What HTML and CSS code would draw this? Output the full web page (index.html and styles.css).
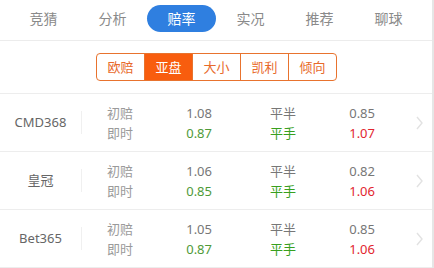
FILE: index.html
```html
<!DOCTYPE html>
<html lang="zh-CN">
<head>
<meta charset="utf-8">
<title>赔率</title>
<link rel="stylesheet" href="styles.css">
</head>
<body>
<div class="page">
  <nav class="tabs">
    <span class="tab">竞猜</span>
    <span class="tab">分析</span>
    <span class="tab active">赔率</span>
    <span class="tab">实况</span>
    <span class="tab">推荐</span>
    <span class="tab">聊球</span>
  </nav>
  <div class="seg-wrap">
    <div class="seg">
      <span class="seg-item">欧赔</span>
      <span class="seg-item on">亚盘</span>
      <span class="seg-item">大小</span>
      <span class="seg-item">凯利</span>
      <span class="seg-item">倾向</span>
    </div>
  </div>
  <div class="rows">
    <div class="row">
      <div class="name">CMD368</div>
      <div class="group">
        <div class="line"><span class="lbl">初赔</span><span class="val">1.08</span></div>
        <div class="line"><span class="lbl">即时</span><span class="val green">0.87</span></div>
      </div>
      <div class="group">
        <div class="line"><span class="hc">平半</span><span class="val">0.85</span></div>
        <div class="line"><span class="hc green2">平手</span><span class="val red">1.07</span></div>
      </div>
      <div class="arrow"><svg width="7" height="14" viewBox="0 0 7 14"><path d="M1 1 L6 7 L1 13" fill="none" stroke="#e2e2e2" stroke-width="1.4"/></svg></div>
    </div>
    <div class="row">
      <div class="name">皇冠</div>
      <div class="group">
        <div class="line"><span class="lbl">初赔</span><span class="val">1.06</span></div>
        <div class="line"><span class="lbl">即时</span><span class="val green">0.85</span></div>
      </div>
      <div class="group">
        <div class="line"><span class="hc">平半</span><span class="val">0.82</span></div>
        <div class="line"><span class="hc green2">平手</span><span class="val red">1.06</span></div>
      </div>
      <div class="arrow"><svg width="7" height="14" viewBox="0 0 7 14"><path d="M1 1 L6 7 L1 13" fill="none" stroke="#e2e2e2" stroke-width="1.4"/></svg></div>
    </div>
    <div class="row">
      <div class="name">Bet365</div>
      <div class="group">
        <div class="line"><span class="lbl">初赔</span><span class="val">1.05</span></div>
        <div class="line"><span class="lbl">即时</span><span class="val green">0.87</span></div>
      </div>
      <div class="group">
        <div class="line"><span class="hc">平半</span><span class="val">0.85</span></div>
        <div class="line"><span class="hc green2">平手</span><span class="val red">1.06</span></div>
      </div>
      <div class="arrow"><svg width="7" height="14" viewBox="0 0 7 14"><path d="M1 1 L6 7 L1 13" fill="none" stroke="#e2e2e2" stroke-width="1.4"/></svg></div>
    </div>
  </div>
</div>
</body>
</html>
```
FILE: styles.css
```css
html, body {
  margin: 0;
  padding: 0;
  background: #fff;
}
body {
  font-family: "Noto Sans", "Noto Sans CJK SC", sans-serif;
  color: #666;
}
.page {
  width: 432px;
  height: 268px;
  border-right: 2px solid #e6e6e6;
  overflow: hidden;
}
.tabs {
  display: flex;
  padding: 5px 9px 0;
  height: 35px;
  border-bottom: 1px solid #ececec;
  box-sizing: content-box;
}
.tab {
  width: 69px;
  height: 27px;
  line-height: 27px;
  text-align: center;
  font-size: 14px;
  color: #8a8a8a;
  border-radius: 14px;
}
.tab.active {
  background: #2f7fe0;
  color: #fff;
}
.seg-wrap {
  display: flex;
  justify-content: center;
  padding: 12px 0 12px;
  border-bottom: 1px solid #ededed;
  padding-left: 1px;
}
.seg {
  display: flex;
  border: 1px solid #e8732e;
  border-radius: 4px;
  overflow: hidden;
}
.seg-item {
  width: 47px;
  height: 26px;
  line-height: 26px;
  text-align: center;
  font-size: 13px;
  color: #e8692a;
  border-left: 1px solid #e8732e;
}
.seg-item:first-child {
  border-left: none;
}
.seg-item.on {
  background: #f85d0e;
  color: #fff;
}
.row {
  display: flex;
  align-items: center;
  height: 57px;
  border-bottom: 1px solid #ededed;
  font-size: 13px;
}
.name {
  width: 81px;
  text-align: center;
  color: #666;
  border-right: 1px solid #f0f0f0;
  height: 23px;
  line-height: 23px;
}
.group {
  width: 163px;
  box-sizing: border-box;
  padding: 0 33px 0 25px;
}
.line {
  display: flex;
  justify-content: space-between;
  height: 20px;
  line-height: 20px;
}
.lbl { color: #9a9a9a; }
.hc { color: #777; }
.val { color: #777; }
.green { color: #4f9a38; }
.green2 { color: #38a01e; }
.red { color: #e2252f; }
.arrow {
  flex: 1;
  display: flex;
  justify-content: center;
  padding-right: 2px;
}
.arrow svg { display: block; }
```
